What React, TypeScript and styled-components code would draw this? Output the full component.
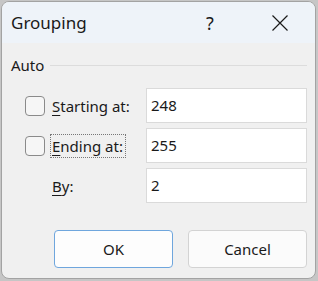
import React from 'react';
import styled, { createGlobalStyle } from 'styled-components';

const GlobalStyle = createGlobalStyle`
  html, body {
    margin: 0;
    padding: 0;
    background: #c6c6c6;
  }
  body {
    font-family: "Noto Sans", "Liberation Sans", sans-serif;
    color: #1a1a1a;
  }
`;

const Window = styled.div`
  box-sizing: border-box;
  width: 315px;
  height: 278px;
  margin: 1px 0 0 1px;
  border: 1px solid #a3a3a3;
  border-radius: 8px;
  overflow: hidden;
  background: #f0f0f0;
  display: flex;
  flex-direction: column;
`;

const TitleBar = styled.div`
  height: 41px;
  background: #eef3f9;
  display: flex;
  align-items: center;
  padding-left: 9px;
`;

const Title = styled.div`
  flex: 1;
  font-size: 17px;
  padding-bottom: 1px;
`;

const CaptionButton = styled.div`
  width: 70px;
  height: 41px;
  display: flex;
  align-items: center;
  justify-content: center;
  font-size: 18px;
`;

const Body = styled.div`
  flex: 1;
  display: flex;
  flex-direction: column;
  padding: 12px 8px 0 9px;
  font-size: 15px;
`;

const GroupHeader = styled.div`
  display: flex;
  align-items: center;
  height: 20px;
  gap: 6px;

  &::after {
    content: '';
    flex: 1;
    height: 1px;
    background: #dcdcdc;
  }
`;

const Fields = styled.div`
  display: grid;
  grid-template-columns: 20px 91px 161px;
  grid-auto-rows: 35px;
  column-gap: 5px;
  row-gap: 5px;
  margin: 13px 0 0 14px;
  align-items: center;
`;

const Check = styled.span`
  box-sizing: border-box;
  width: 20px;
  height: 20px;
  border: 1px solid #8a8a8a;
  border-radius: 4px;
  background: #f6f6f6;
`;

const Label = styled.span<{ $focused?: boolean }>`
  grid-column: 2;
  justify-self: start;
  box-sizing: border-box;
  height: 24px;
  line-height: 22px;
  padding: 0 2px 0 1px;
  border: 1px dotted ${(p) => (p.$focused ? '#777' : 'transparent')};
  white-space: nowrap;

  u {
    text-decoration-thickness: 1px;
    text-underline-offset: 3px;
  }
`;

const Input = styled.div`
  grid-column: 3;
  box-sizing: border-box;
  height: 35px;
  background: #fff;
  border: 1px solid #dadada;
  display: flex;
  align-items: center;
  padding: 0 4px 1px;
`;

const Buttons = styled.div`
  display: flex;
  justify-content: flex-end;
  gap: 15px;
  margin-top: 27px;
`;

const Button = styled.div<{ $default?: boolean }>`
  box-sizing: border-box;
  width: 119px;
  height: 38px;
  border-radius: 4px;
  border: 1px solid ${(p) => (p.$default ? '#6fa6dd' : '#d3d3d3')};
  background: ${(p) => (p.$default ? '#fdfdfd' : '#fbfbfb')};
  display: flex;
  align-items: center;
  justify-content: center;
`;

const CloseIcon = () => (
  <svg width="16" height="16" viewBox="0 0 16 16">
    <path d="M0.5 0.5 L15.5 15.5 M15.5 0.5 L0.5 15.5" stroke="#1a1a1a" strokeWidth="1.2" fill="none" />
  </svg>
);

export default function App() {
  return (
    <>
      <GlobalStyle />
      <Window>
        <TitleBar>
          <Title>Grouping</Title>
          <CaptionButton>?</CaptionButton>
          <CaptionButton><CloseIcon /></CaptionButton>
        </TitleBar>
        <Body>
          <GroupHeader>Auto</GroupHeader>
          <Fields>
            <Check />
            <Label><u>S</u>tarting at:</Label>
            <Input>248</Input>
            <Check />
            <Label $focused><u>E</u>nding at:</Label>
            <Input>255</Input>
            <Label><u>B</u>y:</Label>
            <Input>2</Input>
          </Fields>
          <Buttons>
            <Button $default>OK</Button>
            <Button>Cancel</Button>
          </Buttons>
        </Body>
      </Window>
    </>
  );
}
